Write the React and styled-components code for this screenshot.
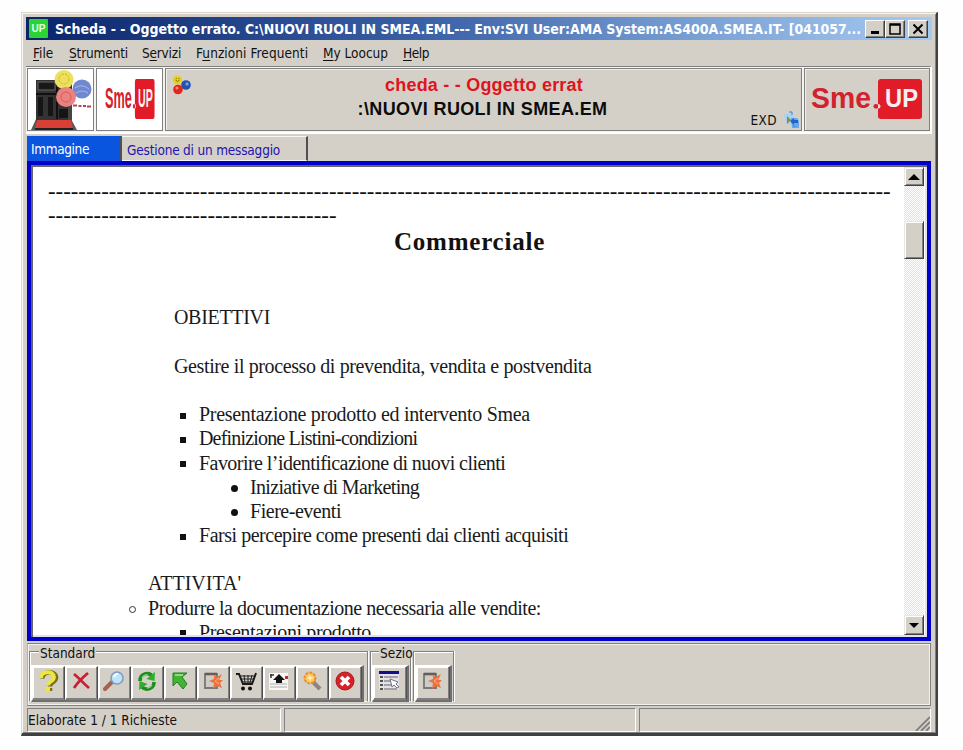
import React from 'react';
import styled, { createGlobalStyle } from 'styled-components';

const face = '#d4d0c8';
const ui = '"DejaVu Sans Condensed", "DejaVu Sans", sans-serif';

const Global = createGlobalStyle`
  *, *::before, *::after { box-sizing: border-box; }
  body { margin: 0; background: #fff; overflow: hidden; }
`;

const Desktop = styled.div`
  width: 963px;
  height: 750px;
  padding: 12px 0 0 21px;
  background: #fefefe;
`;

const Window = styled.div`
  width: 917px;
  height: 724px;
  display: flex;
  flex-direction: column;
  background: ${face};
  border-style: solid;
  border-width: 1px 2px 3px 1px;
  border-color: #d8d4cc #404040 #404040 #dedad2;
  box-shadow: inset 1px 1px 0 #f8f7f4, inset -1px -1px 0 #808080;
  padding: 4px 4px 0 4px;
  font: 13.5px ${ui};
  color: #111;
`;

const Text = styled.span`
  white-space: pre;
  letter-spacing: ${(p) => p.$ls || 0}px;
`;

const TitleBar = styled.header`
  flex: none;
  height: 23px;
  display: flex;
  align-items: center;
  padding: 0 3px 0 3px;
  background: linear-gradient(90deg, #0a246a, #3c62a8 45%, #7ba2d6 75%, #a6caf0);
  color: #fff;
  font: bold 14px ${ui};
`;

const TitleText = styled(Text)`
  width: 810px;
  margin-left: 6px;
`;

const Caption = styled.button`
  width: 20px;
  height: 18px;
  flex: none;
  padding: 0;
  display: grid;
  place-items: center;
  background: ${face};
  border: 1px solid;
  border-color: #fff #404040 #404040 #fff;
  box-shadow: inset -1px -1px 0 #808080;
  margin-left: ${(p) => p.$gap || 0}px;
`;

const MenuBar = styled.nav`
  flex: none;
  height: 26px;
  display: flex;
  align-items: center;
  padding-left: 7px;
`;

const MenuItem = styled(Text)`
  width: ${(p) => p.$w}px;
  flex: none;
  u { text-underline-offset: 2px; }
`;

const Banner = styled.section`
  flex: none;
  height: 68px;
  display: grid;
  grid-template-columns: 67px 67px 637px 126px;
  column-gap: 2px;
  padding: 1px 0 1px 1px;
  border-top: 1px solid #808080;
  border-right: 2px solid #fff;
  border-bottom: 2px solid #fff;
  background: #f4f3f0;
`;

const Cell = styled.div`
  display: grid;
  place-items: center;
  background: ${(p) => (p.$white ? '#fff' : face)};
  border: 1px solid #808080;
  box-shadow: ${(p) => (p.$white ? 'none' : 'inset 1px 1px 0 #f0eee9')};
  overflow: hidden;
`;

const InfoCell = styled(Cell)`
  grid-template-columns: 40px 1fr 75px;
  place-items: stretch;
`;

const BallsSlot = styled.div`
  padding: 6px 0 0 6px;
`;

const Headings = styled.div`
  display: flex;
  flex-direction: column;
  align-items: center;
  padding: 4px 0 0 0;
`;

const Heading = styled(Text)`
  font: bold 18px/24px "Liberation Sans", sans-serif;
  color: ${(p) => p.$color};
  margin-left: ${(p) => p.$shift || 0}px;
`;

const Status = styled.div`
  display: flex;
  align-items: flex-end;
  justify-content: flex-end;
  padding: 0 1px 1px 0;
  gap: 6px;
  line-height: 18px;
  svg { flex: none; }
`;

const Tabs = styled.div`
  flex: none;
  height: 27px;
  display: flex;
  align-items: flex-end;
  padding-left: 1px;
`;

const Tab = styled.div`
  width: ${(p) => p.$w}px;
  height: 25px;
  line-height: ${(p) => (p.$active ? 24 : 27)}px;
  padding-left: ${(p) => (p.$active ? 4 : 5)}px;
  color: ${(p) => (p.$active ? '#fff' : '#1f14b0')};
  background: ${(p) => (p.$active ? '#0a55e0' : face)};
  border-right: 2px solid #505050;
  border-top: 1px solid ${(p) => (p.$active ? '#0a55e0' : '#f6f5f2')};
  border-bottom: 1px solid ${(p) => (p.$active ? '#0a55e0' : '#f6f5f2')};
`;

const Browser = styled.main`
  flex: none;
  height: 480px;
  margin: 0 1px 0 1px;
  display: flex;
  border: 4px solid #0000cc;
  box-shadow: inset 2px 2px 0 #666, inset -2px -2px 0 #e4e0e8;
  padding: 2px 3px 2px 2px;
  background: #fff;
  overflow: hidden;
`;

const Page = styled.article`
  flex: 1;
  height: 468px;
  overflow: hidden;
  padding: 13px 0 0 15px;
  font: 20px/24.2px "Liberation Serif", serif;
  color: #1a1a1a;
`;

const Dashes = styled(Text)`
  display: block;
  font-size: 22.8px;
  color: #111;
`;

const DocTitle = styled.h1`
  margin: 2px 0 50.8px 0;
  padding-left: 346px;
  font: bold 25px/24.2px "Liberation Serif", serif;
  white-space: pre;
  letter-spacing: 0.77px;
  color: #111;
`;

const Line = styled.div`
  height: 24.2px;
  display: flex;
  align-items: center;
  margin-top: ${(p) => (p.$gap ? 24.2 : 0)}px;
  padding-left: ${(p) => p.$x}px;
`;

const Bullet = styled.i`
  width: ${(p) => (p.$kind === 'square' ? 6 : 7)}px;
  height: ${(p) => (p.$kind === 'square' ? 6 : 7)}px;
  margin: 3px ${(p) => (p.$kind === 'square' ? 13 : 12)}px 0 0;
  background: ${(p) => (p.$kind === 'ring' ? 'transparent' : '#111')};
  border: ${(p) => (p.$kind === 'ring' ? '1px solid #333' : '0')};
  border-radius: ${(p) => (p.$kind === 'square' ? 0 : '50%')};
`;

const ScrollBar = styled.div`
  width: 20px;
  flex: none;
  display: flex;
  flex-direction: column;
  background: repeating-conic-gradient(#fff 0 25%, #e4e1db 0 50%) 0 0 / 2px 2px;
`;

const Raised = styled.div`
  height: ${(p) => p.$h}px;
  flex: none;
  margin-top: ${(p) => p.$mt || 0};
  display: grid;
  place-items: center;
  background: ${face};
  border: 1px solid;
  border-color: #e8e6e1 #404040 #404040 #e8e6e1;
  box-shadow: inset 1px 1px 0 #fff, inset -1px -1px 0 #808080;
`;

const ToolPanel = styled.section`
  flex: none;
  height: 63px;
  margin: 2px 1px 0 1px;
  border: 1px solid #808080;
  border-left-color: #b4b0a8;
  box-shadow: inset 1px 1px 0 #f4f2ee, inset -1px -1px 0 #f4f2ee;
  display: flex;
  align-items: flex-start;
  padding: 7px 0 0 1px;
  gap: 2px;
`;

const Group = styled.div`
  width: ${(p) => p.$w}px;
  height: 51px;
  flex: none;
  border: 1px solid #808080;
  border-bottom-color: #fff;
  box-shadow: inset 1px 1px 0 #fff, 1px 0 0 #fff;
`;

const Legend = styled(Text)`
  display: block;
  width: max-content;
  height: 13px;
  line-height: 16px;
  margin: -7px 0 7px ${(p) => p.$x}px;
  padding: 0 1px;
  background: ${face};
`;

const LegendGap = styled.div`
  height: 13px;
`;

const Buttons = styled.div`
  width: max-content;
  margin-left: 1px;
  display: flex;
  border: 1px solid;
  border-color: #fff #707070 #707070 #fff;
  border-right-width: 2px;
  border-bottom-width: 2px;
`;

const ToolButton = styled.button`
  width: ${(p) => p.$w || 33}px;
  height: 34px;
  padding: 0 2px 5px 0;
  display: grid;
  place-items: center;
  background: ${face};
  border: 1px solid;
  border-color: #fff #505050 #808080 #fff;
  box-shadow: inset -1px -1px 0 #808080, inset 1px 1px 0 #fff;
`;

const StatusBar = styled.footer`
  flex: none;
  height: 24px;
  margin: 2px 1px 0 1px;
  display: grid;
  grid-template-columns: 254px 352px 1fr;
  gap: 3px;
`;

const Pane = styled.div`
  display: flex;
  align-items: center;
  justify-content: space-between;
  border: 1px solid;
  border-color: #808080 #fff #fff #808080;
`;

const GripSlot = styled.div`
  align-self: flex-end;
  height: 15px;
`;

const Brand = ({ w, h }) => (
  <svg width={w} height={h} viewBox="0 0 112 44" preserveAspectRatio="none">
    <rect x="67" y="1" width="44" height="41" rx="3" fill="#e11b28" />
    <g fontFamily='"Liberation Sans", sans-serif' fontWeight="bold" fontSize="30">
      <text x="0" y="31" fill="#d3222e" textLength="60" lengthAdjust="spacingAndGlyphs">Sme</text>
      <text x="74" y="30" fill="#f6eeee" textLength="33" lengthAdjust="spacingAndGlyphs" fontSize="26">UP</text>
    </g>
    <circle cx="65" cy="29" r="2.500" fill="#d3222e" />
    <path d="M67 26.500a2.500 2.500 0 0 1 0 5z" fill="#f3d5d5" />
  </svg>
);

const Server = () => (
  <svg width="65" height="63" viewBox="0 0 65 63">
    <path d="M8 11h36v48H8z" fill="#343232" />
    <path d="M10 13h17v8H10z" fill="#181818" stroke="#666" />
    <path d="M29 14v36M8 25h20" stroke="#111" strokeWidth="2" />
    <path d="M10 28h5v19h-5zM20 28h5v19h-5zM31 40h9v9h-9z" fill="#151515" />
    <path d="M40 30h4v22h-4z" fill="#444" />
    <path d="M8 50 3 61h8zM43 50l6 11H39z" fill="#486059" />
    <path d="M9 51h34l2 8H7z" fill="#d83f36" />
    <path d="M7 59h38v3H7z" fill="#242020" />
    <circle cx="36" cy="10.500" r="9.500" fill="#eee05d" />
    <circle cx="36" cy="10" r="5" fill="none" stroke="#c5b32d" strokeDasharray="2 1" />
    <circle cx="54" cy="20" r="9.500" fill="#7088d0" />
    <path d="M47 19q7-5 14 1M48 24q7-4 12 0" stroke="#a9b8e8" fill="none" />
    <circle cx="38" cy="28" r="10" fill="#e98280" />
    <circle cx="38" cy="28" r="5" fill="none" stroke="#d45d5c" />
    <path d="M45 36.500h4m1.500.500h3m1.500 0h3m1 .500h4" stroke="#b64450" strokeWidth="2.200" />
  </svg>
);

const Balls = () => (
  <svg width="20" height="20" viewBox="0 0 20 20">
    <circle cx="5.500" cy="5" r="4.600" fill="#e7cf1c" />
    <path d="M3.500 5q2 3 4 0M4 3.500h.8M6.400 3.500h.8" stroke="#806c00" fill="none" />
    <circle cx="14" cy="10" r="4.800" fill="#2352ae" />
    <circle cx="15" cy="9" r="1.700" fill="#6f9be4" />
    <circle cx="6" cy="14.500" r="4.800" fill="#e5241c" />
    <circle cx="5" cy="13" r="1.500" fill="#ff8d80" />
  </svg>
);

const Exchange = () => (
  <svg width="17" height="18" viewBox="0 0 17 18">
    <path d="M1 3h7l3 3v7H3z" fill="#a9d2f2" />
    <path d="M8 7h6l2 3v7H9z" fill="#69a5ec" />
    <path d="m4 5 4 4-4 4V5z" fill="#7f9446" />
    <path d="m7 10 4-3v2h4v3h-4v2z" fill="#2263c8" />
    <path d="M6 1h3v3M10 14l2 2" stroke="#3984dc" fill="none" />
  </svg>
);

const Icon = ({ children }) => (
  <svg width="22" height="22" viewBox="0 0 22 22" fill="none">{children}</svg>
);

const icons = {
  help: (
    <Icon>
      <path d="M5 8.500c1-8 14-8 14-1 0 5-6 4-6 9M13 18v3" stroke="#777018" strokeWidth="4.600" />
      <path d="M4 8c0-7.500 13-7.500 13-1 0 5-6 4-6 8.500" stroke="#eee63c" strokeWidth="3.800" />
      <path d="M9 17h4v4H9z" fill="#eee63c" />
    </Icon>
  ),
  close: (
    <Icon>
      <path d="M4 4c5 4 9 9 15 14M18 3C12 8 8 12 4 18" stroke="#ca1d36" strokeWidth="2.800" />
    </Icon>
  ),
  search: (
    <Icon>
      <path d="m9 12-7 7" stroke="#a4624f" strokeWidth="4" strokeLinecap="round" />
      <circle cx="14" cy="8" r="6" fill="#bfe3fa" stroke="#7e9dc0" strokeWidth="1.600" />
      <path d="M11 7q1-3 4-3" stroke="#fff" strokeWidth="2" />
    </Icon>
  ),
  refresh: (
    <Icon>
      <path d="M4 11c0-8 9-9 12-5" stroke="#218a22" strokeWidth="3.600" />
      <path d="m19 2-.5 9-8-2z" fill="#2fae2d" />
      <path d="M18 12c0 7-8 9-12 5" stroke="#218a22" strokeWidth="3.600" />
      <path d="m3 20 .500-9 8 3z" fill="#2fae2d" />
      <path d="M6 8q2-4 6-3M16 15q-2 3-5 3" stroke="#86dc73" strokeWidth="1.300" />
    </Icon>
  ),
  arrow: (
    <Icon>
      <path d="M4 3h14l-5 4 5 7-4 5-6-7-4 4z" fill="#3fb535" stroke="#267d25" />
      <path d="M6 5h8" stroke="#8ae077" strokeWidth="2" />
    </Icon>
  ),
  exit: (
    <Icon>
      <path d="M3 4h12v14H3z" fill="#cfcbc5" stroke="#777" strokeWidth="1.800" />
      <path d="M3 4h12" stroke="#665d58" strokeWidth="2.600" />
      <path d="m20 4-5 3-3-2v4l-5 2 5 2-1 6 4-3 5 2-2-5 3-3h-4z" fill="#ed7141" />
      <path d="m17 8-4 3 4 3" stroke="#f8b36c" />
    </Icon>
  ),
  cart: (
    <Icon>
      <path d="M1 4h3l4 10h9l4-11" stroke="#191919" strokeWidth="2" />
      <path d="M5 6h14M6 9h12M7 12h10M9 5l1 8M13 5v8M17 5l-2 8" stroke="#202020" />
      <circle cx="8" cy="18.500" r="2" fill="#111" />
      <circle cx="15" cy="18.500" r="2" fill="#111" />
    </Icon>
  ),
  upload: (
    <Icon>
      <path d="M1 3h19v17H1z" fill="#f7f7f5" />
      <path d="m11 4 6 6h-3v3H8v-3H5z" fill="#111" />
      <path d="M2 5h4M3 4v4" stroke="#333" strokeWidth="1.500" />
      <path d="M17 6h3v3h-3z" fill="#c52b31" />
      <path d="M2 14h17M2 17h17" stroke="#aaa" />
    </Icon>
  ),
  wand: (
    <Icon>
      <path d="m11 11 8 8" stroke="#8a8580" strokeWidth="4" />
      <circle cx="9" cy="8" r="5.400" fill="#fac769" stroke="#ee8c26" strokeWidth="2" strokeDasharray="3 1" />
      <path d="m9 5 1 2 3 1-3 1-1 3-1-3-2-1 2-1z" fill="#fff1a8" />
    </Icon>
  ),
  stop: (
    <Icon>
      <circle cx="11" cy="11" r="9" fill="#d5212a" stroke="#a8161f" />
      <path d="m7 7 8 8m0-8-8 8" stroke="#fff" strokeWidth="3.600" />
    </Icon>
  ),
  list: (
    <Icon>
      <path d="M1 2h20v18H1z" fill="#e5e3e5" />
      <path d="M1 2.500h20" stroke="#101090" strokeWidth="3" />
      <path d="M2 7h3M2 11h3M2 15h3M2 19h3" stroke="#222" strokeWidth="1.600" />
      <path d="M6 7h14M6 11h9M6 15h9M6 19h13" stroke="#62626e" strokeWidth="1.200" />
      <path d="m12 9 8 3-2 2 3 3-2 1-3-3-2 2z" fill="#fff" stroke="#6b7488" />
    </Icon>
  ),
};

const menus = [
  ['', 'F', 'ile', 36, 0],
  ['', 'S', 'trumenti', 73, -0.14],
  ['S', 'e', 'rvizi', 54, -0.2],
  ['F', 'u', 'nzioni Frequenti', 127, 0.08],
  ['', 'M', 'y Loocup', 80, 0],
  ['', 'H', 'elp', 40, -0.4],
];

const bullets = [
  [132, 'square', 'Presentazione prodotto ed intervento Smea', -0.3, true],
  [132, 'square', 'Definizione Listini-condizioni', -0.82],
  [132, 'square', 'Favorire l’identificazione di nuovi clienti', -0.55],
  [183, 'disc', 'Iniziative di Marketing', -0.66],
  [183, 'disc', 'Fiere-eventi', -0.47],
  [132, 'square', 'Farsi percepire come presenti dai clienti acquisiti', -0.47],
];

const standardTools = ['help', 'close', 'search', 'refresh', 'arrow', 'exit', 'cart', 'upload', 'wand', 'stop'];

export default function App() {
  return (
    <Desktop>
      <Global />
      <Window>
        <TitleBar>
          <svg width="20" height="20" viewBox="0 0 20 20">
            <rect width="19" height="19" rx="1" fill="#2bd335" />
            <text x="2.500" y="12.500" fontSize="10" fontWeight="bold" fontFamily="Liberation Sans, sans-serif" fill="#e6ffe6">UP</text>
          </svg>
          <TitleText $ls={-0.035}>
            {'Scheda - - Oggetto errato. C:\\NUOVI RUOLI IN SMEA.EML--- Env:SVI User:AMA System:AS400A.SMEA.IT- [041057...'}
          </TitleText>
          <Caption>
            <svg width="12" height="12"><path d="M2 9.500h8" stroke="#000" strokeWidth="3" /></svg>
          </Caption>
          <Caption>
            <svg width="12" height="12"><path d="M1 1h10v10H1z M1 2h10" stroke="#000" fill="none" strokeWidth="1.500" /></svg>
          </Caption>
          <Caption $gap={3}>
            <svg width="12" height="12"><path d="m1.500 1.500 9 9m0-9-9 9" stroke="#000" strokeWidth="2" /></svg>
          </Caption>
        </TitleBar>
        <MenuBar>
          {menus.map(([pre, key, rest, w, ls]) => (
            <MenuItem key={rest} $w={w} $ls={ls}>{pre}<u>{key}</u>{rest}</MenuItem>
          ))}
        </MenuBar>
        <Banner>
          <Cell $white><Server /></Cell>
          <Cell $white><Brand w={50} h={43} /></Cell>
          <InfoCell>
            <BallsSlot><Balls /></BallsSlot>
            <Headings>
              <Heading $color="#e0141c" $ls={0.22} $shift={36}>cheda - - Oggetto errat</Heading>
              <Heading $color="#0c0c0c" $ls={0.37} $shift={33}>{':\\NUOVI RUOLI IN SMEA.EM'}</Heading>
            </Headings>
            <Status><Text $ls={0.4}>EXD</Text><Exchange /></Status>
          </InfoCell>
          <Cell><Brand w={112} h={43} /></Cell>
        </Banner>
        <Tabs>
          <Tab $active $w={95}><Text $ls={-0.36}>Immagine</Text></Tab>
          <Tab $w={186}><Text $ls={-0.19}>Gestione di un messaggio</Text></Tab>
        </Tabs>
        <Browser>
          <Page>
            <Dashes>{'-'.repeat(111)}</Dashes>
            <Dashes>{'-'.repeat(38)}</Dashes>
            <DocTitle>Commerciale</DocTitle>
            <Line $x={126}><Text $ls={-0.32}>OBIETTIVI</Text></Line>
            <Line $x={126} $gap><Text $ls={-0.38}>Gestire il processo di prevendita, vendita e postvendita</Text></Line>
            {bullets.map(([x, kind, text, ls, gap]) => (
              <Line key={text} $x={x} $gap={gap}>
                <Bullet $kind={kind} />
                <Text $ls={ls}>{text}</Text>
              </Line>
            ))}
            <Line $x={100} $gap><Text>ATTIVITA'</Text></Line>
            <Line $x={81}>
              <Bullet $kind="ring" />
              <Text $ls={-0.45}>Produrre la documentazione necessaria alle vendite:</Text>
            </Line>
            <Line $x={132}>
              <Bullet $kind="square" />
              <Text $ls={-0.39}>Presentazioni prodotto</Text>
            </Line>
          </Page>
          <ScrollBar>
            <Raised $h={19}><svg width="12" height="6"><path d="m0 6 6-6 6 6z" /></svg></Raised>
            <Raised $h={38} $mt="35px" />
            <Raised $h={20} $mt="auto"><svg width="10" height="5"><path d="m0 0 5 5 5-5z" /></svg></Raised>
          </ScrollBar>
        </Browser>
        <ToolPanel>
          <Group $w={339}>
            <Legend $x={9}>Standard</Legend>
            <Buttons>
              {standardTools.map((name) => <ToolButton key={name}>{icons[name]}</ToolButton>)}
            </Buttons>
          </Group>
          <Group $w={41}>
            <Legend $x={8} $ls={0.1}>Sezio</Legend>
            <Buttons><ToolButton $w={34}>{icons.list}</ToolButton></Buttons>
          </Group>
          <Group $w={41}>
            <LegendGap />
            <Buttons><ToolButton $w={34}>{icons.exit}</ToolButton></Buttons>
          </Group>
        </ToolPanel>
        <StatusBar>
          <Pane><Text>Elaborate 1 / 1 Richieste</Text></Pane>
          <Pane />
          <Pane>
            <span />
            <GripSlot>
              <svg width="15" height="15"><path d="M1 15 15 1M6 15l9-9M11 15l4-4" stroke="#808080" strokeWidth="1.800" /></svg>
            </GripSlot>
          </Pane>
        </StatusBar>
      </Window>
    </Desktop>
  );
}
